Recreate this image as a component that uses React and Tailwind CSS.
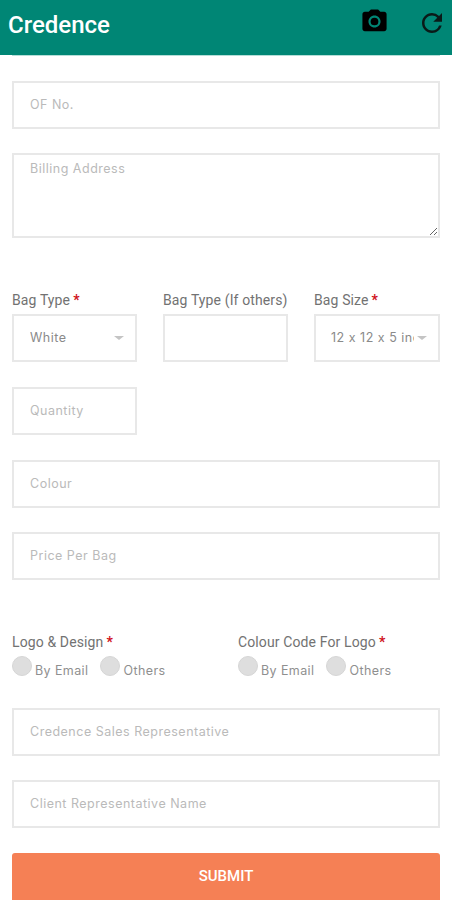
import React from "react";
import { MdCameraAlt, MdRefresh } from "react-icons/md";

const box = "block w-full border-2 border-[#e8e8e8] bg-white text-[12.5px] tracking-[0.5px] [font-feature-settings:'calt'_0] text-[#8a8a8a] placeholder:text-[#bababa] outline-none px-4 font-['Inter',sans-serif]";

function Input({ placeholder, className = "" }) {
  return <input placeholder={placeholder} className={`${box} h-12 pb-[2px] ${className}`} />;
}

function Label({ children, required }) {
  return (
    <div className="font-['Roboto',sans-serif] text-[14px] leading-4 tracking-[0.12px] text-[#727272] whitespace-nowrap h-4">
      {children}
      {required && <span className="text-[#d0111b] ml-[3px] font-bold">*</span>}
    </div>
  );
}

function Select({ value, className = "", textClass = "" }) {
  return (
    <div className={`${box} h-12 flex items-center ${className}`}>
      <span className={`flex-1 min-w-0 overflow-hidden whitespace-nowrap ${textClass}`}>{value}</span>
      <span className="ml-[3px] -mr-[5px] w-0 h-0 border-x-[5px] border-x-transparent border-t-[4px] border-t-[#c4c4c4] shrink-0" />
    </div>
  );
}

function Radio({ label, className = "" }) {
  return (
    <div className={`flex items-start ${className}`}>
      <span className="w-5 h-5 rounded-full bg-[#dedede] border border-[#d6d6d6] shrink-0" />
      <span className="ml-[3px] mt-[7px] text-[12.5px] tracking-[0.4px] leading-4 text-[#8f8f8f] font-['Inter',sans-serif]">{label}</span>
    </div>
  );
}

export default function App() {
  return (
    <div className="w-[452px] h-[900px] overflow-hidden bg-white">
      <header className="h-[55px] bg-[#008675] flex items-center pl-2 pr-2 pb-[6px]">
        <h1 className="flex-1 text-white text-[24px] font-medium font-['Roboto',sans-serif]">Credence</h1>
        <MdCameraAlt className="text-black text-[29px] mr-[28px] mb-[6px]" />
        <MdRefresh className="text-[#0a1a18] text-[30px] -mr-[3px] mb-[4px]" />
      </header>
      <div className="mx-3 h-px bg-[#b5ded8]" />
      <main className="px-3 pt-[25px]">
        <Input placeholder="OF No." />
        <textarea
          placeholder="Billing Address"
          className={`${box} h-[85px] mt-6 pt-[5px] resize-y`}
        />
        <div className="grid grid-cols-[125px_125px_minmax(0,1fr)] gap-x-[26px] mt-[54px]">
          <div>
            <Label required>Bag Type</Label>
            <Select value="White" className="mt-[6px]" />
          </div>
          <div>
            <Label>Bag Type (If others)</Label>
            <input className={`${box} h-12 mt-[6px]`} />
          </div>
          <div>
            <Label required>Bag Size</Label>
            <Select value="12 x 12 x 5 inches" className="mt-[6px]" textClass="-ml-px" />
          </div>
          <div className="mt-[25px]">
            <Input placeholder="Quantity" />
          </div>
        </div>
        <Input placeholder="Colour" className="mt-[25px]" />
        <Input placeholder="Price Per Bag" className="mt-6" />
        <div className="grid grid-cols-2 mt-[54px]">
          <div>
            <Label required>Logo &amp; Design</Label>
            <div className="flex mt-[6px]">
              <Radio label="By Email" />
              <Radio label="Others" className="ml-3" />
            </div>
          </div>
          <div className="pl-3">
            <Label required>Colour Code For Logo</Label>
            <div className="flex mt-[6px]">
              <Radio label="By Email" />
              <Radio label="Others" className="ml-3" />
            </div>
          </div>
        </div>
        <Input placeholder="Credence Sales Representative" className="mt-[29px]" />
        <Input placeholder="Client Representative Name" className="mt-6" />
        <button className="mt-[25px] w-full h-[60px] rounded-[3px] bg-[#f58055] text-white text-[15px] font-['Roboto',sans-serif] font-medium pb-[13px]">
          SUBMIT
        </button>
      </main>
    </div>
  );
}
